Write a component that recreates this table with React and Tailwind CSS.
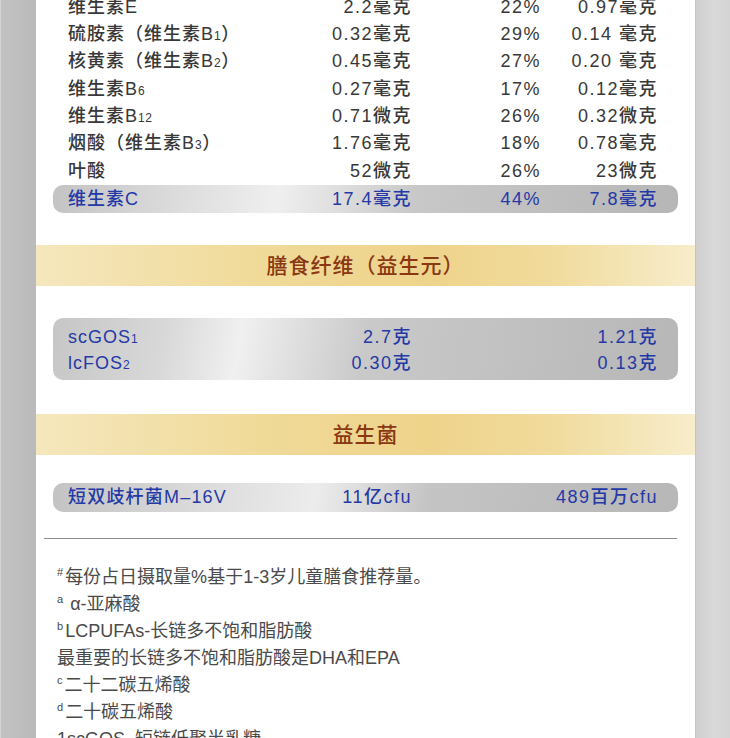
import React from "react";

const vitamins = [
  { name: "维生素E", amount: "2.2毫克", pct: "22%", per: "0.97毫克" },
  { name: "硫胺素（维生素B", sub: "1", tail: "）", amount: "0.32毫克", pct: "29%", per: "0.14 毫克" },
  { name: "核黄素（维生素B", sub: "2", tail: "）", amount: "0.45毫克", pct: "27%", per: "0.20 毫克" },
  { name: "维生素B", sub: "6", amount: "0.27毫克", pct: "17%", per: "0.12毫克" },
  { name: "维生素B", sub: "12", amount: "0.71微克", pct: "26%", per: "0.32微克" },
  { name: "烟酸（维生素B", sub: "3", tail: "）", amount: "1.76毫克", pct: "18%", per: "0.78毫克" },
  { name: "叶酸", amount: "52微克", pct: "26%", per: "23微克" },
];

const fiber = [
  { name: "scGOS", sub: "1", amount: "2.7克", per: "1.21克" },
  { name: "lcFOS", sub: "2", amount: "0.30克", per: "0.13克" },
];

const notes = [
  { sup: "#", text: "每份占日摄取量%基于1-3岁儿童膳食推荐量。" },
  { sup: "a", text: " α-亚麻酸" },
  { sup: "b", text: "LCPUFAs-长链多不饱和脂肪酸" },
  { sup: "", text: "最重要的长链多不饱和脂肪酸是DHA和EPA" },
  { sup: "c", text: "二十二碳五烯酸" },
  { sup: "d", text: "二十碳五烯酸" },
  { sup: "", text: "1scGOS–短链低聚半乳糖" },
];

const Label = ({ item }) => (
  <span className="tracking-[1px] whitespace-nowrap">
    {item.name}
    {item.sub && <span className="text-[12px] tracking-[0.5px]">{item.sub}</span>}
    {item.tail}
  </span>
);

const Banner = ({ children }) => (
  <div className="h-[41px] flex items-center justify-center bg-[linear-gradient(to_right,#f5e7bd_0%,#f0da98_35%,#eed38b_60%,#f1db9c_78%,#f7edcb_100%)]">
    <span className="text-[21px] font-medium tracking-[1px] text-[#8a3812]">{children}</span>
  </div>
);

export default function App() {
  return (
    <div
      className="flex w-[730px] h-[738px] overflow-hidden"
      style={{ fontFamily: '"Liberation Sans", "Noto Sans CJK SC", sans-serif' }}
    >
      {/* left gutter */}
      <div className="w-[36px] shrink-0 border-l border-[#d4d4d4] bg-[linear-gradient(to_right,#c2c2c2,#bababa)]" />

      {/* content */}
      <div className="w-[659px] shrink-0 bg-white">
        {/* vitamins */}
        <div className="mt-[-6.7px] px-[17px] text-[18px] font-medium text-[#383838]">
          {vitamins.map((v) => (
            <div
              key={v.name + (v.sub || "")}
              className="h-[27.4px] pl-[15px] pr-[20px] grid grid-cols-[214px_130px_129px_117px] items-center"
            >
              <Label item={v} />
              <span className="text-right tracking-[1.5px]">{v.amount}</span>
              <span className="text-right tracking-[1.5px]">{v.pct}</span>
              <span className="text-right tracking-[1.5px]">{v.per}</span>
            </div>
          ))}
          <div className="h-[28px] pl-[15px] pr-[20px] grid grid-cols-[214px_130px_129px_117px] items-center rounded-[10px] text-[#2439a6] bg-[linear-gradient(100deg,#c3c3c3_0%,#dcdcdc_20%,#efefef_36%,#c8c8c8_58%,#b6b6b6_100%)]">
            <span className="tracking-[1px]">维生素C</span>
            <span className="text-right tracking-[1.5px]">17.4毫克</span>
            <span className="text-right tracking-[1.5px]">44%</span>
            <span className="text-right tracking-[1.5px]">7.8毫克</span>
          </div>
        </div>

        <div className="mt-[32px]">
          <Banner>膳食纤维（益生元）</Banner>
        </div>

        {/* prebiotics */}
        <div className="mt-[32px] px-[17px] text-[18px] font-medium text-[#2439a6]">
          <div className="h-[62px] pt-[6px] pl-[15px] pr-[20px] rounded-[10px] bg-[linear-gradient(100deg,#c6c6c6_0%,#d8d8d8_18%,#f0f0f0_30%,#c9c9c9_50%,#b7b7b7_100%)]">
            {fiber.map((f) => (
              <div key={f.name} className="h-[26px] grid grid-cols-[214px_130px_246px] items-center">
                <Label item={f} />
                <span className="text-right tracking-[1.5px]">{f.amount}</span>
                <span className="text-right tracking-[1.5px]">{f.per}</span>
              </div>
            ))}
          </div>
        </div>

        <div className="mt-[34px]">
          <Banner>益生菌</Banner>
        </div>

        {/* probiotics */}
        <div className="mt-[28px] px-[17px] text-[18px] font-medium text-[#2439a6]">
          <div className="h-[29px] pl-[15px] pr-[20px] grid grid-cols-[214px_130px_246px] items-center rounded-[10px] bg-[linear-gradient(100deg,#c3c3c3_0%,#dcdcdc_25%,#ececec_42%,#c4c4c4_60%,#b7b7b7_100%)]">
            <span className="tracking-[1.2px] whitespace-nowrap">短双歧杆菌M–16V</span>
            <span className="text-right tracking-[1.5px]">11亿cfu</span>
            <span className="text-right tracking-[1.5px]">489百万cfu</span>
          </div>
        </div>

        <div className="mt-[26px] ml-[8px] mr-[18px] h-px bg-[#8c8c8c]" />

        {/* footnotes */}
        <div className="mt-[25px] pl-[21px] text-[18px] leading-[27px] text-[#4a4a4a]">
          {notes.map((n, i) => (
            <div key={i} className="whitespace-nowrap">
              {n.sup && <span className="align-super text-[11px] leading-none mr-[2px]">{n.sup}</span>}
              {n.text}
            </div>
          ))}
        </div>
      </div>

      {/* right gutter */}
      <div className="flex-1 border-l border-[#c4c4c4] bg-[linear-gradient(to_right,#cfcfcf,#d9d9d9_50%,#d4d4d4)]" />
    </div>
  );
}
